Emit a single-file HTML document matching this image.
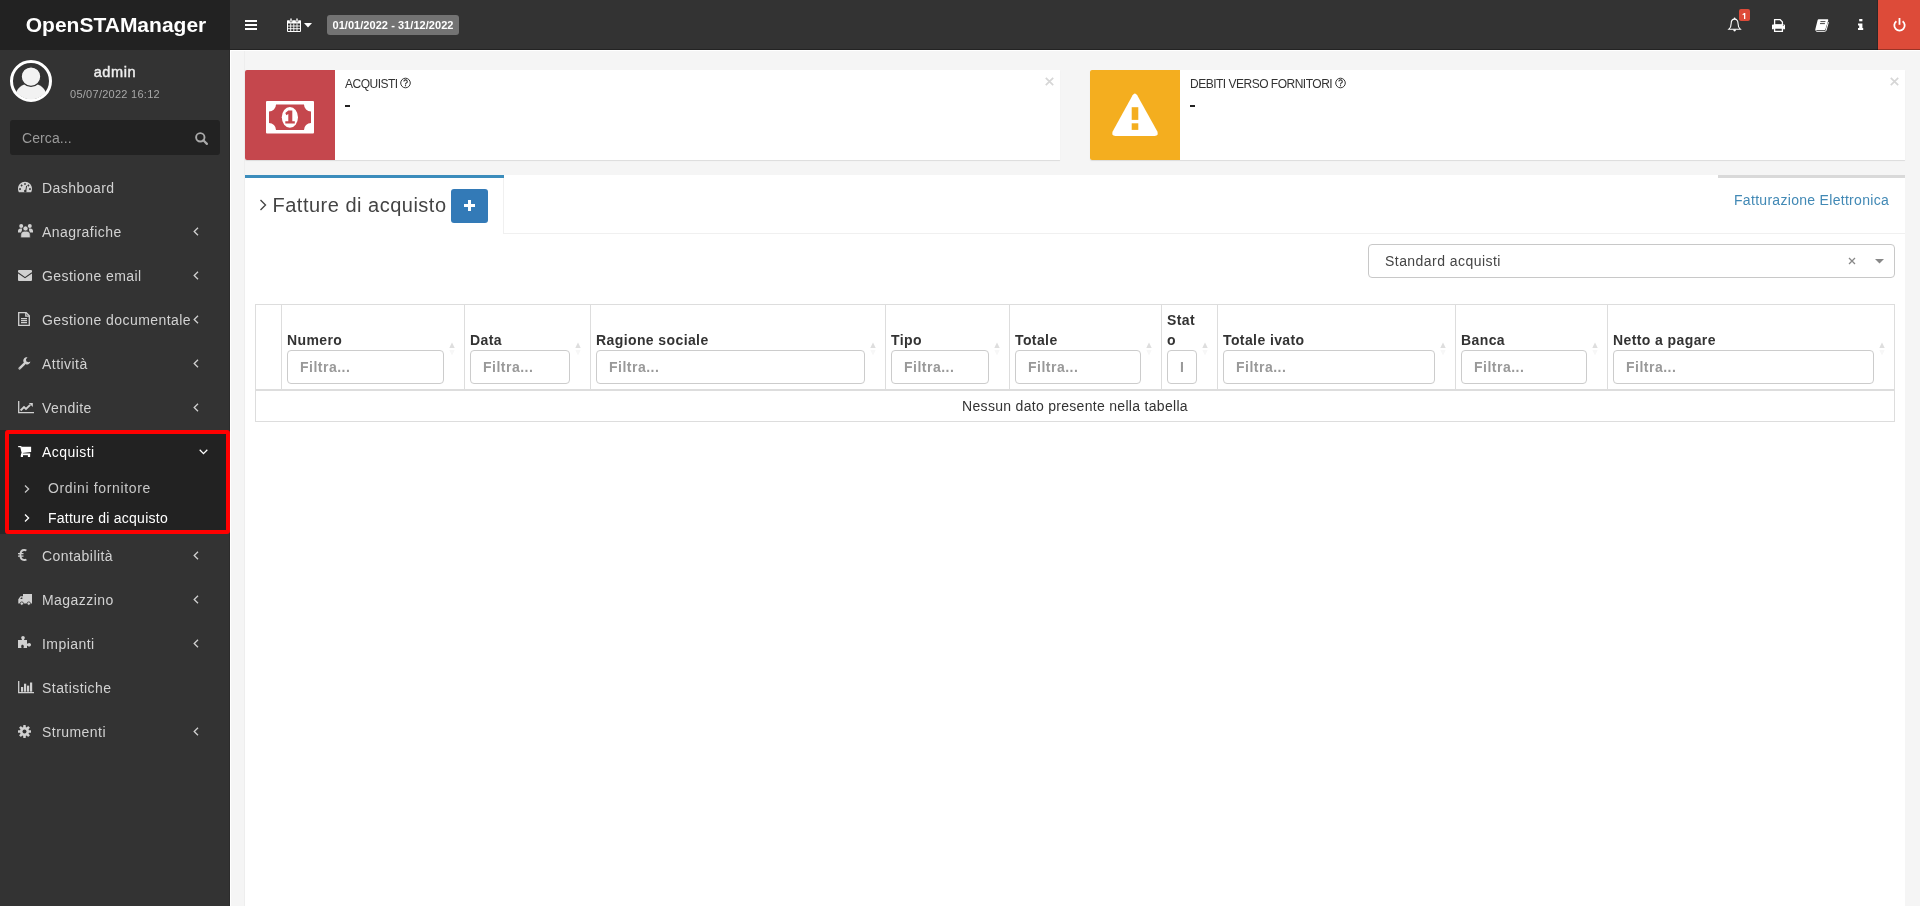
<!DOCTYPE html>
<html><head><meta charset="utf-8">
<style>
*{box-sizing:border-box;margin:0;padding:0}
html,body{width:1920px;height:906px;overflow:hidden}
body{font-family:"Liberation Sans",sans-serif;background:#f5f5f5;position:relative;color:#333;will-change:transform}
.a{position:absolute}
svg{position:absolute;overflow:visible}
#logo{left:0;top:0;width:230px;text-indent:2px;height:50px;background:#222;color:#fff;font-weight:bold;font-size:21px;line-height:50px;text-align:center}
#nav{left:230px;top:0;width:1690px;height:50px;background:#333}
#side{left:0;top:50px;width:230px;height:856px;background:#333;border-right:1px solid #2c2c2c}
.mi{position:absolute;left:0;width:230px;height:44px;color:#d2d2d2;font-size:14px;letter-spacing:0.45px}
.mi .t{position:absolute;left:42px;top:1px;line-height:44px;white-space:nowrap}
.txt{position:absolute;white-space:nowrap}
</style></head><body>
<div id="logo" class="a">OpenSTAManager</div>
<div id="nav" class="a"></div>
<div id="side" class="a"></div>
<div class="a" style="left:230px;top:50px;width:1px;height:856px;background:#fff"></div>
<div class="a" style="left:230px;top:50px;width:1690px;height:1px;background:#fff"></div>

<!-- NAVBAR -->
<svg style="left:245px;top:20px" width="12" height="10"><rect x="0" y="0" width="12" height="2" fill="#fff"/><rect x="0" y="4" width="12" height="2" fill="#fff"/><rect x="0" y="8" width="12" height="2" fill="#fff"/></svg>
<!-- calendar -->
<svg style="left:287px;top:18px" width="14" height="14" viewBox="0 0 14 14">
<path d="M0.5 3h13v10.5h-13z" fill="none" stroke="#fff" stroke-width="1"/>
<rect x="0" y="2.5" width="14" height="3" fill="#fff"/>
<rect x="3" y="0" width="2" height="4" rx="1" fill="#fff" stroke="#333" stroke-width="0.6"/>
<rect x="9" y="0" width="2" height="4" rx="1" fill="#fff" stroke="#333" stroke-width="0.6"/>
<path d="M3.7 5.5v8M6.8 5.5v8M10 5.5v8M0.5 8h13M0.5 10.7h13" stroke="#fff" stroke-width="0.9"/>
</svg>
<svg style="left:304px;top:23px" width="8" height="5"><path d="M0 0h8L4 4.5z" fill="#fff"/></svg>
<div class="a" style="left:327px;top:15px;width:132px;height:20px;background:#737373;border-radius:3px;color:#fff;font-weight:bold;font-size:11px;line-height:20px;text-align:center;letter-spacing:0.05px">01/01/2022 - 31/12/2022</div>

<!-- bell -->
<svg style="left:1728px;top:17px" width="14" height="15" viewBox="0 0 14 15">
<path d="M6.6 2.1C4.4 2.1 3.2 3.9 3.2 6.2c0 2.9-0.7 4.6-2.3 6H12.3c-1.6-1.4-2.3-3.1-2.3-6C10 3.9 8.8 2.1 6.6 2.1z" fill="none" stroke="#fff" stroke-width="1.1"/>
<path d="M5.3 12.6h2.6v0.5a1.3 1.3 0 0 1-2.6 0z" fill="#fff"/>
<circle cx="6.6" cy="1.3" r="0.9" fill="#fff"/>
</svg>
<div class="a" style="left:1739px;top:9px;width:11px;height:12px;background:#dd4b39;border-radius:2px"></div>
<svg style="left:1742px;top:13px" width="4" height="6" viewBox="0 0 4 6"><path d="M0.4 1.3L2.2 0.1H3.3V6H2V1.6L0.9 2.3z" fill="#fff"/></svg>
<!-- printer -->
<svg style="left:1772px;top:18.5px" width="13" height="13" viewBox="0 0 13 13">
<path d="M2.6 0.7h5.6l2.2 2.2v3H2.6z" fill="none" stroke="#fff" stroke-width="1.3"/>
<path d="M0 6.3a0.9 0.9 0 0 1 0.9-0.9h11.2a0.9 0.9 0 0 1 0.9 0.9V10.3h-1.9V9H1.9v1.3H0z" fill="#fff"/>
<path d="M2.6 9.2h7.8v3.1H2.6z" fill="none" stroke="#fff" stroke-width="1.3"/>
<circle cx="11.3" cy="6.3" r="0.5" fill="#333"/>
</svg>
<!-- book -->
<svg style="left:1815px;top:18.5px" width="14" height="13" viewBox="0 0 14 13">
<path d="M3.6 0.3h8.7c0.8 0 1.1 0.5 0.9 1.2L10.4 10.2c-0.2 0.6-0.6 0.9-1.2 0.9H1.3c-0.8 0-1.1-0.5-0.9-1.2L2.6 1.2C2.8 0.6 3.1 0.3 3.6 0.3z" fill="#fff"/>
<path d="M1.1 10.4c-0.5 1.3 0 1.9 0.9 1.9h7.8c0.7 0 1.1-0.3 1.3-1l2.3-8.2" fill="none" stroke="#fff" stroke-width="1"/>
<path d="M5.4 2.6h5M5 4.6h4.9" stroke="#333" stroke-width="0.9"/>
</svg>
<!-- info -->
<svg style="left:1858px;top:19px" width="6" height="12" viewBox="0 0 6 12">
<rect x="1.2" y="0" width="3.2" height="2.3" fill="#fff"/>
<path d="M0 4.4h4.4v4.7H5.2v2H0v-2h1.2V6.4H0z" fill="#fff"/>
</svg>
<div class="a" style="left:1877px;top:0;width:1px;height:50px;background:#2a2a2a"></div>
<div class="a" style="left:1878px;top:0;width:42px;height:50px;background:#dd4b39"></div>
<svg style="left:1892.5px;top:18px" width="13" height="13" viewBox="0 0 13 13">
<path d="M3.4 3.2A5.2 5.2 0 1 0 9.6 3.2" fill="none" stroke="#fff" stroke-width="1.8"/>
<path d="M6.5 0v6.8" stroke="#fff" stroke-width="1.8"/>
</svg>
<div class="a" style="left:230px;top:49px;width:1690px;height:1px;background:rgba(0,0,0,0.3)"></div>

<!-- SIDEBAR user panel -->
<svg style="left:10px;top:60px" width="42" height="42" viewBox="0 0 42 42">
<defs><clipPath id="cc"><circle cx="21" cy="21" r="18.5"/></clipPath></defs>
<circle cx="21" cy="21" r="19.5" fill="none" stroke="#fff" stroke-width="3"/>
<g clip-path="url(#cc)"><ellipse cx="21" cy="36" rx="15.3" ry="13" fill="#f2f2f2"/></g>
<circle cx="21" cy="16.6" r="9.8" fill="#f2f2f2" stroke="#333" stroke-width="1.2"/>
</svg>
<div class="txt" style="left:93.7px;top:63px;color:#eee;font-weight:normal;-webkit-text-stroke:0.45px #eee;font-size:14.5px;line-height:18px;letter-spacing:0.6px">admin</div>
<div class="txt" style="left:70px;top:87px;color:#a8a8a8;font-size:11px;line-height:14px;letter-spacing:0.27px">05/07/2022 16:12</div>
<div class="a" style="left:10px;top:120px;width:210px;height:35px;background:#222;border-radius:3px"></div>
<div class="txt" style="left:22px;top:129px;color:#9a9a9a;font-size:14px;line-height:18px;letter-spacing:0.1px">Cerca...</div>
<svg style="left:195px;top:132px" width="14" height="13" viewBox="0 0 14 13">
<circle cx="5.3" cy="5.3" r="4.2" fill="none" stroke="#aaa" stroke-width="1.9"/>
<path d="M8.3 8.3l3.6 3.6" stroke="#aaa" stroke-width="2.2" stroke-linecap="round"/>
</svg>

<!-- MENU -->
<div class="mi" style="top:165px"><div class="t">Dashboard</div></div>
<div class="mi" style="top:209px"><div class="t">Anagrafiche</div></div>
<div class="mi" style="top:253px"><div class="t">Gestione email</div></div>
<div class="mi" style="top:297px"><div class="t">Gestione documentale</div></div>
<div class="mi" style="top:341px"><div class="t">Attività</div></div>
<div class="mi" style="top:385px"><div class="t">Vendite</div></div>
<!-- active -->
<div class="a" style="left:0;top:430px;width:6px;height:104px;background:#272727"></div>
<div class="a" style="left:5px;top:430px;width:225px;height:104px;background:#222;border:4px solid #f00;border-radius:3px"></div>
<div class="mi" style="top:429px;color:#fff"><div class="t">Acquisti</div></div>
<div class="txt" style="left:48px;top:479px;color:#c8c8c8;font-size:14px;line-height:18px;letter-spacing:0.65px">Ordini fornitore</div>
<div class="txt" style="left:48px;top:509px;color:#fff;font-size:14px;line-height:18px;letter-spacing:0.25px">Fatture di acquisto</div>
<div class="mi" style="top:533px"><div class="t">Contabilità</div></div>
<div class="mi" style="top:577px"><div class="t">Magazzino</div></div>
<div class="mi" style="top:621px"><div class="t">Impianti</div></div>
<div class="mi" style="top:665px"><div class="t">Statistiche</div></div>
<div class="mi" style="top:709px"><div class="t">Strumenti</div></div>



<!-- menu icons -->
<svg style="left:18px;top:181px" width="14" height="12" viewBox="0 0 14 12">
<path d="M7 0.8C3.2 0.8 0 3.9 0 7.7c0 1.3 0.3 2.5 0.9 3.6h12.2c0.6-1.1 0.9-2.3 0.9-3.6C14 3.9 10.8 0.8 7 0.8z" fill="#d0d0d0"/>
<rect x="6.2" y="2.2" width="1.6" height="1.6" fill="#333"/>
<rect x="2.8" y="3.7" width="1.6" height="1.6" fill="#333" transform="rotate(45 3.6 4.5)"/>
<rect x="9.6" y="3.7" width="1.6" height="1.6" fill="#333" transform="rotate(45 10.4 4.5)"/>
<rect x="1.2" y="7.2" width="1.7" height="1.7" fill="#333"/>
<rect x="11.1" y="7.2" width="1.7" height="1.7" fill="#333"/>
<path d="M8.6 4.8L7.9 9.2" stroke="#333" stroke-width="1"/>
<circle cx="7.3" cy="10" r="1.3" fill="#333"/>
</svg>
<svg style="left:18px;top:223px" width="15" height="15" viewBox="0 0 15 15">
<circle cx="3.2" cy="3" r="2" fill="#d0d0d0"/><circle cx="11.8" cy="3" r="2" fill="#d0d0d0"/>
<circle cx="7.5" cy="5.6" r="2.5" fill="#d0d0d0" stroke="#333" stroke-width="0.6"/>
<path d="M0 8c0-1.5 1-2.5 2.4-2.5h1.8c-0.3 0.5-0.4 1-0.2 1.7L3 9.5H0z" fill="#d0d0d0"/>
<path d="M15 8c0-1.5-1-2.5-2.4-2.5h-1.8c0.3 0.5 0.4 1 0.2 1.7L12 9.5h3z" fill="#d0d0d0"/>
<path d="M2.8 12c0-2.3 1.5-3.8 3.5-3.8h2.4c2 0 3.5 1.5 3.5 3.8v2.7H2.8z" fill="#d0d0d0" stroke="#333" stroke-width="0.6"/>
</svg>
<svg style="left:18px;top:270px" width="14" height="11" viewBox="0 0 14 11">
<rect x="0" y="0" width="14" height="11" rx="1" fill="#d0d0d0"/>
<path d="M0 2.8L7 7.6 14 2.8" fill="none" stroke="#333" stroke-width="1.1"/>
</svg>
<svg style="left:18px;top:312px" width="12" height="14" viewBox="0 0 12 14">
<path d="M0.7 0.7h7.5l3.1 3.1v9.5H0.7z" fill="none" stroke="#d0d0d0" stroke-width="1.3"/>
<path d="M7.8 0.7v3.4h3.5" fill="none" stroke="#d0d0d0" stroke-width="1.3"/>
<path d="M3 6.6h6M3 8.6h6M3 10.6h6" stroke="#d0d0d0" stroke-width="1.1"/>
</svg>
<svg style="left:18px;top:357px" width="13" height="13" viewBox="0 0 13 13">
<path d="M1.6 11.4L6.2 6.8" stroke="#d0d0d0" stroke-width="2.4" stroke-linecap="round"/>
<path d="M10.8 0.8a3.6 3.6 0 1 0 1.6 3.6L10.6 5.3 8.4 4.6 7.9 2.4 9.3 0.6z" fill="#d0d0d0"/>
<circle cx="1.9" cy="11.1" r="0.45" fill="#333"/>
</svg>
<svg style="left:18px;top:401px" width="16" height="13" viewBox="0 0 16 13">
<path d="M0.7 0v11.7H16" fill="none" stroke="#d0d0d0" stroke-width="1.3"/>
<path d="M2.6 9.5L6 6l2 2 4.2-4.2" fill="none" stroke="#d0d0d0" stroke-width="1.9"/>
<path d="M10.8 2h4v4z" fill="#d0d0d0"/>
</svg>
<svg style="left:18px;top:446px" width="14" height="12" viewBox="0 0 14 12">
<path d="M0.6 0.6h2.2l1.6 6.8" fill="none" stroke="#fff" stroke-width="1.2" stroke-linecap="round"/>
<path d="M3 0.7H13.1V6L4.1 7z" fill="#fff"/>
<rect x="3" y="7.4" width="9.2" height="1.8" fill="#fff"/>
<rect x="2.8" y="9" width="2.2" height="2" fill="#fff"/>
<rect x="9.9" y="9" width="2.2" height="2" fill="#fff"/>
</svg>
<svg style="left:18px;top:549px" width="9" height="12" viewBox="0 0 9 12">
<path d="M8.4 1.6C7.8 1.2 7 1 6.2 1 3.9 1 2.4 3 2.4 6s1.5 5 3.8 5c0.8 0 1.6-0.2 2.2-0.6" fill="none" stroke="#d0d0d0" stroke-width="1.8"/>
<path d="M0 4.6h5.5M0 7.2h5.5" stroke="#d0d0d0" stroke-width="1.2"/>
</svg>
<svg style="left:18px;top:594px" width="14" height="12" viewBox="0 0 14 12">
<path d="M5 0h9v9.5H0.3V5.3L2.5 2.3H5z" fill="#d0d0d0"/>
<path d="M2.2 4.9L3.2 3.6h1.2v1.3z" fill="#333"/>
<circle cx="3.8" cy="9.6" r="1.7" fill="#d0d0d0" stroke="#333" stroke-width="0.8"/>
<circle cx="10.8" cy="9.6" r="1.7" fill="#d0d0d0" stroke="#333" stroke-width="0.8"/>
</svg>
<svg style="left:18px;top:636px" width="13" height="12" viewBox="0 0 13 12">
<path d="M0 4h3.5c0.5 0 0.6-0.4 0.3-0.8-0.4-0.4-0.6-0.9-0.6-1.4C3.2 0.8 4 0 5 0s1.8 0.8 1.8 1.8c0 0.5-0.2 1-0.6 1.4-0.3 0.4-0.2 0.8 0.3 0.8H9v3.3c0 0.5 0.4 0.6 0.8 0.3 0.4-0.4 0.9-0.6 1.4-0.6 1 0 1.8 0.8 1.8 1.8s-0.8 1.8-1.8 1.8c-0.5 0-1-0.2-1.4-0.6C9.4 9.6 9 9.7 9 10.2V12H6c-0.5 0-0.6-0.4-0.4-0.8 0.2-0.3 0.2-0.7 0.2-1 0-0.8-0.6-1.5-1.4-1.5S3.2 9.4 3.2 10.2c0 0.3 0 0.7 0.2 1 0.2 0.4 0.1 0.8-0.4 0.8H0z" fill="#d0d0d0"/>
</svg>
<svg style="left:18px;top:681px" width="16" height="13" viewBox="0 0 16 13">
<path d="M0.7 0v11.7H16" fill="none" stroke="#d0d0d0" stroke-width="1.3"/>
<rect x="3" y="6" width="2.2" height="4.7" fill="#d0d0d0"/>
<rect x="6" y="2.7" width="2.2" height="8" fill="#d0d0d0"/>
<rect x="9" y="4.6" width="2.2" height="6.1" fill="#d0d0d0"/>
<rect x="12" y="1.5" width="2.2" height="9.2" fill="#d0d0d0"/>
</svg>
<svg style="left:18px;top:725px" width="13" height="13" viewBox="0 0 13 13">
<g fill="#d0d0d0">
<rect x="5.2" y="0" width="2.6" height="13" rx="0.4"/>
<rect x="5.2" y="0" width="2.6" height="13" rx="0.4" transform="rotate(45 6.5 6.5)"/>
<rect x="5.2" y="0" width="2.6" height="13" rx="0.4" transform="rotate(90 6.5 6.5)"/>
<rect x="5.2" y="0" width="2.6" height="13" rx="0.4" transform="rotate(135 6.5 6.5)"/>
<circle cx="6.5" cy="6.5" r="4.6"/>
</g>
<circle cx="6.5" cy="6.5" r="2" fill="#333"/>
</svg>
<svg style="left:193px;top:227px" width="6" height="9" viewBox="0 0 6 9"><path d="M5 0.7L1.2 4.5 5 8.3" fill="none" stroke="#d0d0d0" stroke-width="1.3"/></svg>
<svg style="left:193px;top:271px" width="6" height="9" viewBox="0 0 6 9"><path d="M5 0.7L1.2 4.5 5 8.3" fill="none" stroke="#d0d0d0" stroke-width="1.3"/></svg>
<svg style="left:193px;top:315px" width="6" height="9" viewBox="0 0 6 9"><path d="M5 0.7L1.2 4.5 5 8.3" fill="none" stroke="#d0d0d0" stroke-width="1.3"/></svg>
<svg style="left:193px;top:359px" width="6" height="9" viewBox="0 0 6 9"><path d="M5 0.7L1.2 4.5 5 8.3" fill="none" stroke="#d0d0d0" stroke-width="1.3"/></svg>
<svg style="left:193px;top:403px" width="6" height="9" viewBox="0 0 6 9"><path d="M5 0.7L1.2 4.5 5 8.3" fill="none" stroke="#d0d0d0" stroke-width="1.3"/></svg>
<svg style="left:193px;top:551px" width="6" height="9" viewBox="0 0 6 9"><path d="M5 0.7L1.2 4.5 5 8.3" fill="none" stroke="#d0d0d0" stroke-width="1.3"/></svg>
<svg style="left:193px;top:595px" width="6" height="9" viewBox="0 0 6 9"><path d="M5 0.7L1.2 4.5 5 8.3" fill="none" stroke="#d0d0d0" stroke-width="1.3"/></svg>
<svg style="left:193px;top:639px" width="6" height="9" viewBox="0 0 6 9"><path d="M5 0.7L1.2 4.5 5 8.3" fill="none" stroke="#d0d0d0" stroke-width="1.3"/></svg>
<svg style="left:193px;top:727px" width="6" height="9" viewBox="0 0 6 9"><path d="M5 0.7L1.2 4.5 5 8.3" fill="none" stroke="#d0d0d0" stroke-width="1.3"/></svg>
<svg style="left:199px;top:449px" width="9" height="6" viewBox="0 0 9 6"><path d="M0.7 0.8L4.5 4.6 8.3 0.8" fill="none" stroke="#fff" stroke-width="1.3"/></svg>
<svg style="left:24px;top:485px" width="6" height="8" viewBox="0 0 6 8"><path d="M1 0.5L4.6 4 1 7.5" fill="none" stroke="#c8c8c8" stroke-width="1.3"/></svg>
<svg style="left:24px;top:514px" width="6" height="8" viewBox="0 0 6 8"><path d="M1 0.5L4.6 4 1 7.5" fill="none" stroke="#fff" stroke-width="1.3"/></svg>

<!-- CONTENT -->
<div class="a" style="left:244px;top:51px;width:1px;height:855px;background:#eee"></div>
<!-- info box 1 -->
<div class="a" style="left:245px;top:70px;width:815px;height:90px;background:#fff;border-radius:2px 0 0 2px;box-shadow:0 1px 1px rgba(0,0,0,0.1)"></div>
<div class="a" style="left:245px;top:70px;width:90px;height:90px;background:#c5474d;border-radius:2px 0 0 2px"></div>
<svg style="left:266px;top:100.5px" width="48" height="33" viewBox="0 0 48 33">
<rect x="0" y="0" width="48" height="32.5" rx="1" fill="#fff"/>
<path d="M10 3.6H38A7 7 0 0 0 45 10.6V22A7 7 0 0 0 38 29H10A7 7 0 0 0 3 22V10.6A7 7 0 0 0 10 3.6z" fill="#c5474d"/>
<ellipse cx="23.9" cy="16.3" rx="8.1" ry="10.4" fill="#fff"/>
<path d="M22.3 9.6H26.3V20.2H28.8V22.5H19.3V20.2H22.3V13L20.4 14.2 19.3 12z" fill="#c5474d"/>
</svg>
<div class="txt" style="left:345px;top:76px;font-size:12px;line-height:16px;color:#333;letter-spacing:-0.5px">ACQUISTI</div>
<svg style="left:400px;top:77px" width="12" height="12" viewBox="0 0 12 12"><circle cx="5.5" cy="6" r="4.8" fill="none" stroke="#333" stroke-width="1"/><path d="M3.9 4.6a1.7 1.7 0 1 1 2.4 1.5c-0.6 0.3-0.8 0.6-0.8 1.3" fill="none" stroke="#333" stroke-width="1.1"/><circle cx="5.5" cy="8.7" r="0.65" fill="#333"/></svg>
<div class="a" style="left:345px;top:105px;width:5px;height:2px;background:#222"></div>
<svg style="left:1044.8px;top:77px" width="9" height="9" viewBox="0 0 9 9"><path d="M0.8 0.8l7.4 7.4M8.2 0.8L0.8 8.2" stroke="#d6d6d6" stroke-width="1.7"/></svg>

<!-- info box 2 -->
<div class="a" style="left:1090px;top:70px;width:815px;height:90px;background:#fff;border-radius:2px 0 0 2px;box-shadow:0 1px 1px rgba(0,0,0,0.1)"></div>
<div class="a" style="left:1090px;top:70px;width:90px;height:90px;background:#f4ae1f;border-radius:2px 0 0 2px"></div>
<svg style="left:1112px;top:93px" width="46" height="43" viewBox="0 0 46 43">
<path d="M20.6 2.2Q22.9-1.4 25.2 2.2L45.2 38.3Q47.2 42.9 42.6 42.9H3.4Q-1.2 42.9 0.8 38.3z" fill="#fff"/>
<rect x="19.7" y="14.2" width="6.6" height="12.7" fill="#f4ae1f"/>
<rect x="19.7" y="30.3" width="6.6" height="6.6" fill="#f4ae1f"/>
</svg>
<div class="txt" style="left:1190px;top:76px;font-size:12px;line-height:16px;color:#333;letter-spacing:-0.5px">DEBITI VERSO FORNITORI</div>
<svg style="left:1334.5px;top:77px" width="12" height="12" viewBox="0 0 12 12"><circle cx="5.5" cy="6" r="4.8" fill="none" stroke="#333" stroke-width="1"/><path d="M3.9 4.6a1.7 1.7 0 1 1 2.4 1.5c-0.6 0.3-0.8 0.6-0.8 1.3" fill="none" stroke="#333" stroke-width="1.1"/><circle cx="5.5" cy="8.7" r="0.65" fill="#333"/></svg>
<div class="a" style="left:1190px;top:105px;width:5px;height:2px;background:#222"></div>
<svg style="left:1889.5px;top:77px" width="9" height="9" viewBox="0 0 9 9"><path d="M0.8 0.8l7.4 7.4M8.2 0.8L0.8 8.2" stroke="#d6d6d6" stroke-width="1.7"/></svg>

<!-- tabs box -->
<div class="a" style="left:245px;top:175px;width:1660px;height:731px;background:#fff"></div>
<div class="a" style="left:245px;top:175px;width:259px;height:3px;background:#3c8dbc"></div>
<div class="a" style="left:503px;top:178px;width:1px;height:56px;background:#f0f0f0"></div>
<div class="a" style="left:504px;top:233px;width:1401px;height:1px;background:#f0f0f0"></div>
<div class="a" style="left:1718px;top:175px;width:187px;height:3px;background:#d9d9d9"></div>
<svg style="left:259px;top:199px" width="9" height="12" viewBox="0 0 9 12"><path d="M1.5 1l5 5-5 5" fill="none" stroke="#444" stroke-width="1.35"/></svg>
<div class="txt" style="left:272.5px;top:193px;font-size:20px;line-height:24px;color:#444;letter-spacing:0.5px">Fatture di acquisto</div>
<div class="a" style="left:451px;top:189px;width:37px;height:34px;background:#337ab7;border-radius:3px"></div>
<svg style="left:464px;top:200px" width="11" height="11" viewBox="0 0 11 11"><path d="M5.5 0v11M0 5.5h11" stroke="#fff" stroke-width="3"/></svg>
<div class="txt" style="left:1734px;top:190.5px;font-size:14px;line-height:18px;color:#4289b5;letter-spacing:0.3px">Fatturazione Elettronica</div>

<!-- select -->
<div class="a" style="left:1368px;top:244px;width:527px;height:34px;border:1px solid #c8c8c8;border-radius:4px;background:#fff"></div>
<div class="txt" style="left:1385px;top:252px;font-size:14px;line-height:18px;color:#444;letter-spacing:0.45px">Standard acquisti</div>
<svg style="left:1848px;top:257px" width="8" height="8" viewBox="0 0 8 8"><path d="M1 1l6 6M7 1L1 7" stroke="#888" stroke-width="1.3"/></svg>
<svg style="left:1875px;top:259px" width="9" height="5"><path d="M0 0h9L4.5 4.5z" fill="#888"/></svg>

<!-- table -->
<div class="a" style="left:255px;top:304px;width:1640px;height:118px;border:1px solid #ddd"></div>
<div class="a" style="left:256px;top:389px;width:1638px;height:2px;background:#ddd"></div>
<div class="a" style="left:281px;top:305px;width:1px;height:84px;background:#ddd"></div>
<div class="txt" style="left:287px;top:330px;font-size:14px;line-height:20px;font-weight:bold;color:#333;letter-spacing:0.4px">Numero</div>
<div class="a" style="left:287px;top:350px;width:157px;height:34px;border:1px solid #ccc;border-radius:4px;background:#fff;overflow:hidden;white-space:nowrap;color:#999;font-weight:bold;font-size:14px;line-height:32px;padding-left:12px;letter-spacing:0.5px">Filtra...</div>
<svg style="left:449px;top:342px" width="6" height="14" viewBox="0 0 6 14"><path d="M0.3 6L3 0.5l2.7 5.5z" fill="#dedede"/><path d="M0.3 8l2.7 5.5 2.7-5.5z" fill="#f7f7f7"/></svg>
<div class="a" style="left:464px;top:305px;width:1px;height:84px;background:#ddd"></div>
<div class="txt" style="left:470px;top:330px;font-size:14px;line-height:20px;font-weight:bold;color:#333;letter-spacing:0.4px">Data</div>
<div class="a" style="left:470px;top:350px;width:100px;height:34px;border:1px solid #ccc;border-radius:4px;background:#fff;overflow:hidden;white-space:nowrap;color:#999;font-weight:bold;font-size:14px;line-height:32px;padding-left:12px;letter-spacing:0.5px">Filtra...</div>
<svg style="left:575px;top:342px" width="6" height="14" viewBox="0 0 6 14"><path d="M0.3 6L3 0.5l2.7 5.5z" fill="#dedede"/><path d="M0.3 8l2.7 5.5 2.7-5.5z" fill="#f7f7f7"/></svg>
<div class="a" style="left:590px;top:305px;width:1px;height:84px;background:#ddd"></div>
<div class="txt" style="left:596px;top:330px;font-size:14px;line-height:20px;font-weight:bold;color:#333;letter-spacing:0.4px">Ragione sociale</div>
<div class="a" style="left:596px;top:350px;width:269px;height:34px;border:1px solid #ccc;border-radius:4px;background:#fff;overflow:hidden;white-space:nowrap;color:#999;font-weight:bold;font-size:14px;line-height:32px;padding-left:12px;letter-spacing:0.5px">Filtra...</div>
<svg style="left:870px;top:342px" width="6" height="14" viewBox="0 0 6 14"><path d="M0.3 6L3 0.5l2.7 5.5z" fill="#dedede"/><path d="M0.3 8l2.7 5.5 2.7-5.5z" fill="#f7f7f7"/></svg>
<div class="a" style="left:885px;top:305px;width:1px;height:84px;background:#ddd"></div>
<div class="txt" style="left:891px;top:330px;font-size:14px;line-height:20px;font-weight:bold;color:#333;letter-spacing:0.4px">Tipo</div>
<div class="a" style="left:891px;top:350px;width:98px;height:34px;border:1px solid #ccc;border-radius:4px;background:#fff;overflow:hidden;white-space:nowrap;color:#999;font-weight:bold;font-size:14px;line-height:32px;padding-left:12px;letter-spacing:0.5px">Filtra...</div>
<svg style="left:994px;top:342px" width="6" height="14" viewBox="0 0 6 14"><path d="M0.3 6L3 0.5l2.7 5.5z" fill="#dedede"/><path d="M0.3 8l2.7 5.5 2.7-5.5z" fill="#f7f7f7"/></svg>
<div class="a" style="left:1009px;top:305px;width:1px;height:84px;background:#ddd"></div>
<div class="txt" style="left:1015px;top:330px;font-size:14px;line-height:20px;font-weight:bold;color:#333;letter-spacing:0.4px">Totale</div>
<div class="a" style="left:1015px;top:350px;width:126px;height:34px;border:1px solid #ccc;border-radius:4px;background:#fff;overflow:hidden;white-space:nowrap;color:#999;font-weight:bold;font-size:14px;line-height:32px;padding-left:12px;letter-spacing:0.5px">Filtra...</div>
<svg style="left:1146px;top:342px" width="6" height="14" viewBox="0 0 6 14"><path d="M0.3 6L3 0.5l2.7 5.5z" fill="#dedede"/><path d="M0.3 8l2.7 5.5 2.7-5.5z" fill="#f7f7f7"/></svg>
<div class="a" style="left:1161px;top:305px;width:1px;height:84px;background:#ddd"></div>
<div class="txt" style="left:1167px;top:310px;font-size:14px;line-height:20px;font-weight:bold;color:#333;letter-spacing:0.4px">Stat<br>o</div>
<div class="a" style="left:1167px;top:350px;width:30px;height:34px;border:1px solid #ccc;border-radius:4px;background:#fff;overflow:hidden;white-space:nowrap;color:#999;font-weight:bold;font-size:14px;line-height:32px;padding-left:12px;letter-spacing:0.5px"><span style="display:inline-block;width:3px;overflow:hidden;vertical-align:top">F</span></div>
<svg style="left:1202px;top:342px" width="6" height="14" viewBox="0 0 6 14"><path d="M0.3 6L3 0.5l2.7 5.5z" fill="#dedede"/><path d="M0.3 8l2.7 5.5 2.7-5.5z" fill="#f7f7f7"/></svg>
<div class="a" style="left:1217px;top:305px;width:1px;height:84px;background:#ddd"></div>
<div class="txt" style="left:1223px;top:330px;font-size:14px;line-height:20px;font-weight:bold;color:#333;letter-spacing:0.4px">Totale ivato</div>
<div class="a" style="left:1223px;top:350px;width:212px;height:34px;border:1px solid #ccc;border-radius:4px;background:#fff;overflow:hidden;white-space:nowrap;color:#999;font-weight:bold;font-size:14px;line-height:32px;padding-left:12px;letter-spacing:0.5px">Filtra...</div>
<svg style="left:1440px;top:342px" width="6" height="14" viewBox="0 0 6 14"><path d="M0.3 6L3 0.5l2.7 5.5z" fill="#dedede"/><path d="M0.3 8l2.7 5.5 2.7-5.5z" fill="#f7f7f7"/></svg>
<div class="a" style="left:1455px;top:305px;width:1px;height:84px;background:#ddd"></div>
<div class="txt" style="left:1461px;top:330px;font-size:14px;line-height:20px;font-weight:bold;color:#333;letter-spacing:0.4px">Banca</div>
<div class="a" style="left:1461px;top:350px;width:126px;height:34px;border:1px solid #ccc;border-radius:4px;background:#fff;overflow:hidden;white-space:nowrap;color:#999;font-weight:bold;font-size:14px;line-height:32px;padding-left:12px;letter-spacing:0.5px">Filtra...</div>
<svg style="left:1592px;top:342px" width="6" height="14" viewBox="0 0 6 14"><path d="M0.3 6L3 0.5l2.7 5.5z" fill="#dedede"/><path d="M0.3 8l2.7 5.5 2.7-5.5z" fill="#f7f7f7"/></svg>
<div class="a" style="left:1607px;top:305px;width:1px;height:84px;background:#ddd"></div>
<div class="txt" style="left:1613px;top:330px;font-size:14px;line-height:20px;font-weight:bold;color:#333;letter-spacing:0.4px">Netto a pagare</div>
<div class="a" style="left:1613px;top:350px;width:261px;height:34px;border:1px solid #ccc;border-radius:4px;background:#fff;overflow:hidden;white-space:nowrap;color:#999;font-weight:bold;font-size:14px;line-height:32px;padding-left:12px;letter-spacing:0.5px">Filtra...</div>
<svg style="left:1879px;top:342px" width="6" height="14" viewBox="0 0 6 14"><path d="M0.3 6L3 0.5l2.7 5.5z" fill="#dedede"/><path d="M0.3 8l2.7 5.5 2.7-5.5z" fill="#f7f7f7"/></svg>
<div class="txt" style="left:256px;top:397px;width:1638px;text-align:center;font-size:14px;line-height:18px;color:#333;letter-spacing:0.3px">Nessun dato presente nella tabella</div>

</body></html>
